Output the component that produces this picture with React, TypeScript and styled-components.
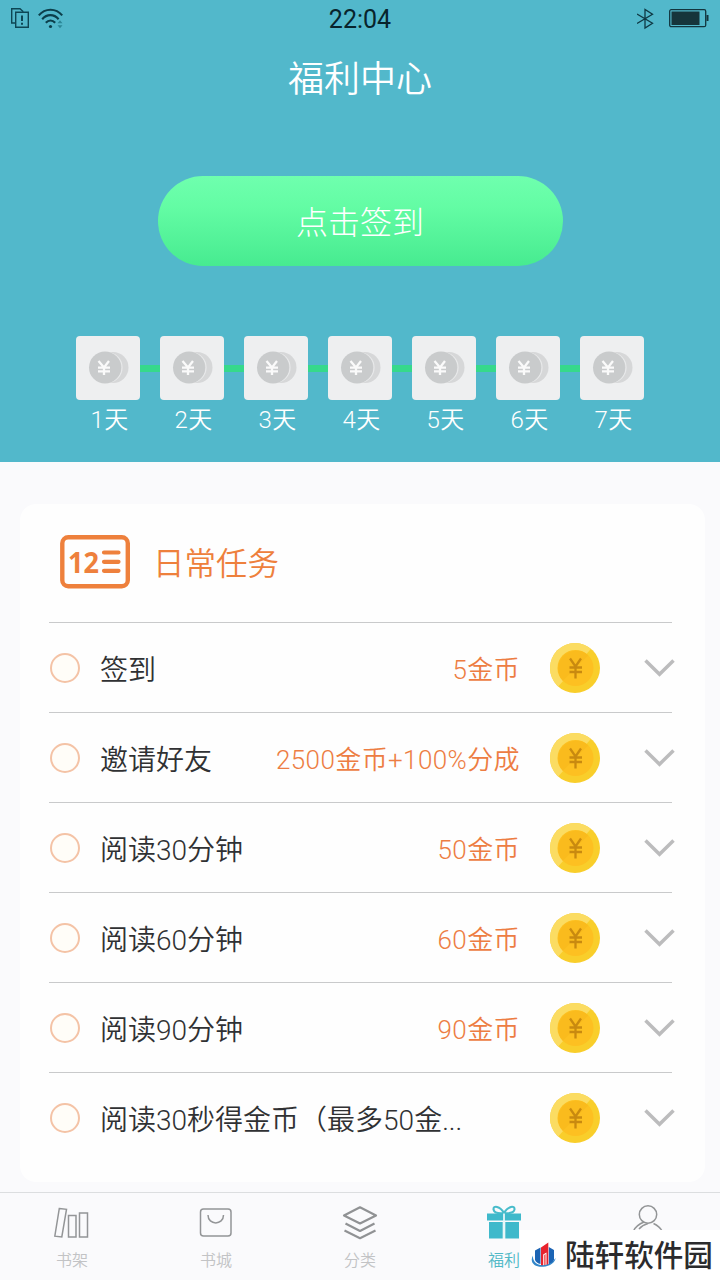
import React from "react";
import styled, { createGlobalStyle } from "styled-components";

const GlobalStyle = createGlobalStyle`
  * { box-sizing: border-box; }
  body {
    margin: 0;
    background: #fafafc;
    font-family: Roboto, "Noto Sans CJK SC", sans-serif;
    font-weight: 350;
  }
`;

const Screen = styled.div`
  position: relative;
  width: 720px;
  height: 1280px;
  display: flex;
  flex-direction: column;
  overflow: hidden;
  background: #fafafc;
`;

const Header = styled.header`
  height: 462px;
  flex: none;
  display: flex;
  flex-direction: column;
  align-items: center;
  background: #52b8cb;
`;

const StatusBar = styled.div`
  width: 100%;
  height: 38px;
  padding: 0 10px;
  display: grid;
  grid-template-columns: 1fr auto 1fr;
  align-items: center;
`;

const StatusGroup = styled.div<{ $end?: boolean }>`
  display: flex;
  align-items: center;
  gap: ${(p) => (p.$end ? 14 : 8)}px;
  justify-content: ${(p) => (p.$end ? "flex-end" : "flex-start")};
  svg { display: block; }
`;

const Clock = styled.span`
  padding-top: 2px;
  font-size: 25px;
  line-height: 36px;
  font-weight: 400;
  color: #08242c;
`;

const Title = styled.h1`
  margin: 22px 0 0;
  font-size: 36px;
  line-height: 40px;
  font-weight: 350;
  color: #fff;
`;

const SignButton = styled.button`
  margin-top: 76px;
  width: 405px;
  height: 90px;
  padding: 4px 0 0;
  border: 0;
  border-radius: 45px;
  background: linear-gradient(#6fffae, #63fca4 35%, #47eb90);
  color: #fff;
  font: inherit;
  font-weight: 300;
  font-size: 32px;
  line-height: 86px;
`;

const Days = styled.div`
  margin-top: 70px;
  display: flex;
`;

const Day = styled.div`
  width: 64px;
  display: flex;
  flex-direction: column;
  align-items: center;
`;

const DayBox = styled.div`
  width: 64px;
  height: 64px;
  border-radius: 4px;
  background: #eeeff0;
  svg { display: block; }
`;

const DayLabel = styled.span`
  margin: 1px 0 0 3px;
  font-size: 24px;
  line-height: 38px;
  white-space: nowrap;
  letter-spacing: 0.4px;
  color: #fff;
`;

const Connector = styled.div`
  width: 20px;
  height: 7px;
  margin-top: 29px;
  background: #36d98b;
`;

const Content = styled.main`
  flex: 1;
  display: flex;
  padding: 42px 15px 10px 20px;
`;

const Card = styled.section`
  flex: 1;
  border-radius: 16px;
  background: #fefefe;
  padding: 0 30px;
`;

const CardHead = styled.div`
  height: 118px;
  padding: 0 0 3px 10px;
  display: flex;
  align-items: center;
  gap: 22px;
  svg { display: block; }
`;

const CardTitle = styled.h2`
  margin: 7px 0 0;
  font-size: 31.5px;
  line-height: 40px;
  font-weight: 350;
  color: #ee803c;
`;

const Row = styled.div`
  height: 90px;
  width: 623px;
  margin-left: -1px;
  border-top: 1px solid #c9cacb;
  display: flex;
  align-items: center;
  padding-left: 1px;
  white-space: nowrap;
`;

const Check = styled.span`
  width: 30px;
  height: 30px;
  flex: none;
  border: 2px solid #f4c3a6;
  border-radius: 50%;
  background: #fffdf8;
`;

const TaskName = styled.span`
  margin: 6px 0 0 20px;
  font-size: 28px;
  line-height: 40px;
  color: #303133;
`;

const Reward = styled.span`
  margin: 5px 30px 0 auto;
  font-size: 26px;
  line-height: 40px;
  letter-spacing: 0.4px;
  color: #ed7d43;
`;

const CoinSlot = styled.span<{ $push?: boolean }>`
  margin-left: ${(p) => (p.$push ? "auto" : "0")};
  width: 50px;
  height: 50px;
  flex: none;
  svg { display: block; }
`;

const ChevronSlot = styled.span`
  margin: 0 -4px 0 44px;
  width: 32px;
  flex: none;
  svg { display: block; }
`;

const TabBar = styled.nav`
  height: 88px;
  flex: none;
  display: flex;
  border-top: 1px solid #dcdee0;
  background: #fafafc;
`;

const Tab = styled.div<{ $active?: boolean }>`
  width: 144px;
  display: flex;
  flex-direction: column;
  align-items: center;
  padding-top: 11px;
  font-size: 16px;
  line-height: 24px;
  color: ${(p) => (p.$active ? "#4fb8c6" : "#c2c3c5")};
  svg { display: block; margin-bottom: 7px; }
`;

const SiteBadge = styled.div`
  position: absolute;
  right: 0;
  bottom: 0;
  width: 200px;
  height: 50px;
  display: flex;
  align-items: center;
  gap: 8px;
  padding-left: 10px;
  background: #fff;
  svg { display: block; flex: none; }
`;

const SiteName = styled.span`
  padding-top: 3px;
  font-size: 29.6px;
  line-height: 47px;
  font-weight: 500;
  white-space: nowrap;
  color: #2b2b2d;
`;

const SimIcon = () => (
  <svg width="20" height="22" viewBox="0 0 20 22" fill="none" stroke="#0d4654" strokeWidth="1.4">
    <path d="M5 15H1.700V.7H10l3.300 3" />
    <path d="M5.700 4.200H18.300V19.300H5.700Z" />
    <path d="M12 7.500v5.500M12 14.700v2" strokeWidth="2" />
  </svg>
);

const WifiIcon = () => (
  <svg width="26" height="22" viewBox="0 0 26 22" fill="none" stroke="#0c3f4b" strokeWidth="2.100">
    <path d="M.8 7.400C7-.2 18-.2 24.200 7.400" />
    <path d="M4.200 11.200c4.600-5.400 11.800-5.400 16.400 0" />
    <path d="M7.800 14.800c2.800-3.100 6.600-3.100 9.400 0" />
    <circle cx="12.500" cy="18.500" r="1.600" fill="#0c3f4b" stroke="none" />
    <path d="M19.500 15.300l2.500-3 2.500 3zM19.500 17.200l2.500 3 2.500-3z" fill="#2b8797" stroke="none" />
  </svg>
);

const BluetoothIcon = () => (
  <svg width="18" height="22" viewBox="0 0 18 22" fill="none" stroke="#0f3944" strokeWidth="1.300">
    <path d="M0 6l15.500 9.300L8 20V1.500l7.500 4.700L0 15.500" />
  </svg>
);

const BatteryIcon = () => (
  <svg width="41" height="20" viewBox="0 0 41 20">
    <rect x=".7" y=".7" width="36" height="17" rx="1.500" fill="none" stroke="#12353e" strokeWidth="1.300" />
    <rect x="2.500" y="2.500" width="28" height="13.500" fill="#16353b" />
    <rect x="37.500" y="6" width="2" height="6" fill="#12353e" />
  </svg>
);

const GreyCoins = () => (
  <svg width="64" height="64" viewBox="0 0 64 64">
    <circle cx="37" cy="31.500" r="15.500" fill="#d6d7d8" />
    <circle cx="31" cy="31.500" r="15" fill="#d0d1d2" stroke="#e8e9ea" strokeWidth="1.200" />
    <circle cx="29" cy="31.500" r="16" fill="#c9cbcc" />
    <path d="M22.500 25l5.500 6.500L33 25M28 31v8M22 31.700h12M22 35.300h12" fill="none" stroke="#fafafa" strokeWidth="2.300" />
  </svg>
);

const IconDigits = styled.text`
  font-family: "Noto Sans", sans-serif;
  font-size: 29px;
  font-weight: 700;
  fill: #ee803c;
  stroke: none;
`;

const CalendarIcon = () => (
  <svg width="71" height="54" viewBox="0 0 71 54" fill="none" stroke="#ee803c">
    <rect x="2.300" y="2.300" width="65.500" height="49" rx="6" strokeWidth="4.400" />
    <IconDigits x="8" y="38" textLength="31" lengthAdjust="spacingAndGlyphs">12</IconDigits>
    <path d="M44 17.500h14.500M44 26.800h14.500M44 35.800h14.500" strokeWidth="4.200" strokeLinecap="round" />
  </svg>
);

const GoldCoin = () => (
  <svg width="50" height="50" viewBox="0 0 50 50">
    <defs>
      <clipPath id="coinEdge"><circle cx="25" cy="25" r="25" /></clipPath>
    </defs>
    <circle cx="25" cy="25" r="25" fill="#f9ce2b" />
    <path d="M0 0h46L7 45 0 36Z" fill="#fbdc62" clipPath="url(#coinEdge)" />
    <circle cx="25.500" cy="25" r="18" fill="#fdc021" />
    <path d="M12.800 37.700A18 18 0 0 1 38.200 12.300Z" fill="#fabb1d" />
    <path d="M20 15.500l5.500 8 5.500-8M25.500 23.500v12M19.500 24.500h12.500M19.500 29h12.500" fill="none" stroke="#c98a10" strokeWidth="2.300" />
  </svg>
);

const Chevron = () => (
  <svg width="32" height="20" viewBox="0 0 32 20">
    <path d="M1.500 2.500l14 13.700 14-13.700" fill="none" stroke="#bcbcbd" strokeWidth="3.500" />
  </svg>
);

const BooksIcon = () => (
  <svg width="36" height="38" viewBox="0 0 36 38" fill="none" stroke="#939597" strokeWidth="1.500">
    <path d="M5.300 4.500l7.200.8L7.800 33l-7-.8Z" />
    <path d="M14.500 11.500h7.500v21.500h-7.500ZM25.500 9h8v24h-8Z" />
  </svg>
);

const StoreIcon = () => (
  <svg width="34" height="38" viewBox="0 0 34 38" fill="none" stroke="#939597" strokeWidth="1.500">
    <rect x="1.500" y="5" width="30.500" height="27" rx="3" />
    <path d="M9 11c0 10.500 15.500 10.500 15.500 0" />
  </svg>
);

const LayersIcon = () => (
  <svg width="36" height="38" viewBox="0 0 36 38" fill="none" stroke="#909294" strokeWidth="2.200" strokeLinejoin="round">
    <path d="M18 3.300L34 11.500 18 19.500 2 11.500Z" />
    <path d="M3.500 19.500L18 27l14.500-7.500M2.500 26.500L18 34.200l15.500-7.700" />
  </svg>
);

const GiftIcon = () => (
  <svg width="36" height="38" viewBox="0 0 36 38">
    <path d="M18 9C14 2 7 1 7.500 5.500 8 8.500 13 9.500 18 9c5 .5 10-.5 10.500-3.500C29 1 22 2 18 9Z" fill="none" stroke="#48bccb" strokeWidth="2" />
    <path d="M1 9.500h34v7H1ZM3 18h13.700V34.500H3ZM19.300 18H33V34.500H19.300Z" fill="#3fb9cb" />
    <path d="M18 9.500V34.500" stroke="#e6f6f8" strokeWidth="1.800" />
  </svg>
);

const PersonIcon = () => (
  <svg width="36" height="38" viewBox="0 0 36 38" fill="none" stroke="#939597" strokeWidth="1.500">
    <circle cx="18" cy="10.500" r="8.700" />
    <path d="M14 18C9 20 5.500 22.500 3.500 27M9 25c2.500-3 5-4.500 9-5.500M23.500 19.500c4 1.800 7 4.500 9 8" />
  </svg>
);

const SiteLogo = () => (
  <svg width="27" height="28" viewBox="0 0 27 28">
    <path d="M5 9.500l5.500-3v16.500c-3-.5-4.500-2-5.500-4ZM18.800 6l5.200 3v10c-1.200 2.500-2.700 3.800-5.200 4.500Z" fill="#1c64b4" />
    <path d="M11 6.500L18.300 1.500V24h-1.800V11.500l-3.300 2V25H11Z" fill="#e8232d" />
    <path d="M14 14l1.700-1V25H14Z" fill="#f2686a" />
    <path d="M3 14.500C-1 21.500 5 26.500 13 25.800 20 25.500 25.500 21 25.500 17 22 22.500 17.500 24.300 12.500 24.200 6.500 24 2.500 20.500 3 14.500Z" fill="#3286c9" />
  </svg>
);

const tasks = [
  { name: "签到", reward: "5金币" },
  { name: "邀请好友", reward: "2500金币+100%分成" },
  { name: "阅读30分钟", reward: "50金币" },
  { name: "阅读60分钟", reward: "60金币" },
  { name: "阅读90分钟", reward: "90金币" },
  { name: "阅读30秒得金币（最多50金...", reward: "" },
];

export default function App() {
  return (
    <Screen>
      <GlobalStyle />
      <Header>
        <StatusBar>
          <StatusGroup><SimIcon /><WifiIcon /></StatusGroup>
          <Clock>22:04</Clock>
          <StatusGroup $end><BluetoothIcon /><BatteryIcon /></StatusGroup>
        </StatusBar>
        <Title>福利中心</Title>
        <SignButton>点击签到</SignButton>
        <Days>
          {[1, 2, 3, 4, 5, 6, 7].map((n) => (
            <React.Fragment key={n}>
              {n > 1 && <Connector />}
              <Day>
                <DayBox><GreyCoins /></DayBox>
                <DayLabel>{n}天</DayLabel>
              </Day>
            </React.Fragment>
          ))}
        </Days>
      </Header>
      <Content>
        <Card>
          <CardHead>
            <CalendarIcon />
            <CardTitle>日常任务</CardTitle>
          </CardHead>
          {tasks.map((t) => (
            <Row key={t.name}>
              <Check />
              <TaskName>{t.name}</TaskName>
              {t.reward && <Reward>{t.reward}</Reward>}
              <CoinSlot $push={!t.reward}><GoldCoin /></CoinSlot>
              <ChevronSlot><Chevron /></ChevronSlot>
            </Row>
          ))}
        </Card>
      </Content>
      <TabBar>
        <Tab><BooksIcon />书架</Tab>
        <Tab><StoreIcon />书城</Tab>
        <Tab><LayersIcon />分类</Tab>
        <Tab $active><GiftIcon />福利</Tab>
        <Tab><PersonIcon /></Tab>
      </TabBar>
      <SiteBadge>
        <SiteLogo />
        <SiteName>陆轩软件园</SiteName>
      </SiteBadge>
    </Screen>
  );
}
